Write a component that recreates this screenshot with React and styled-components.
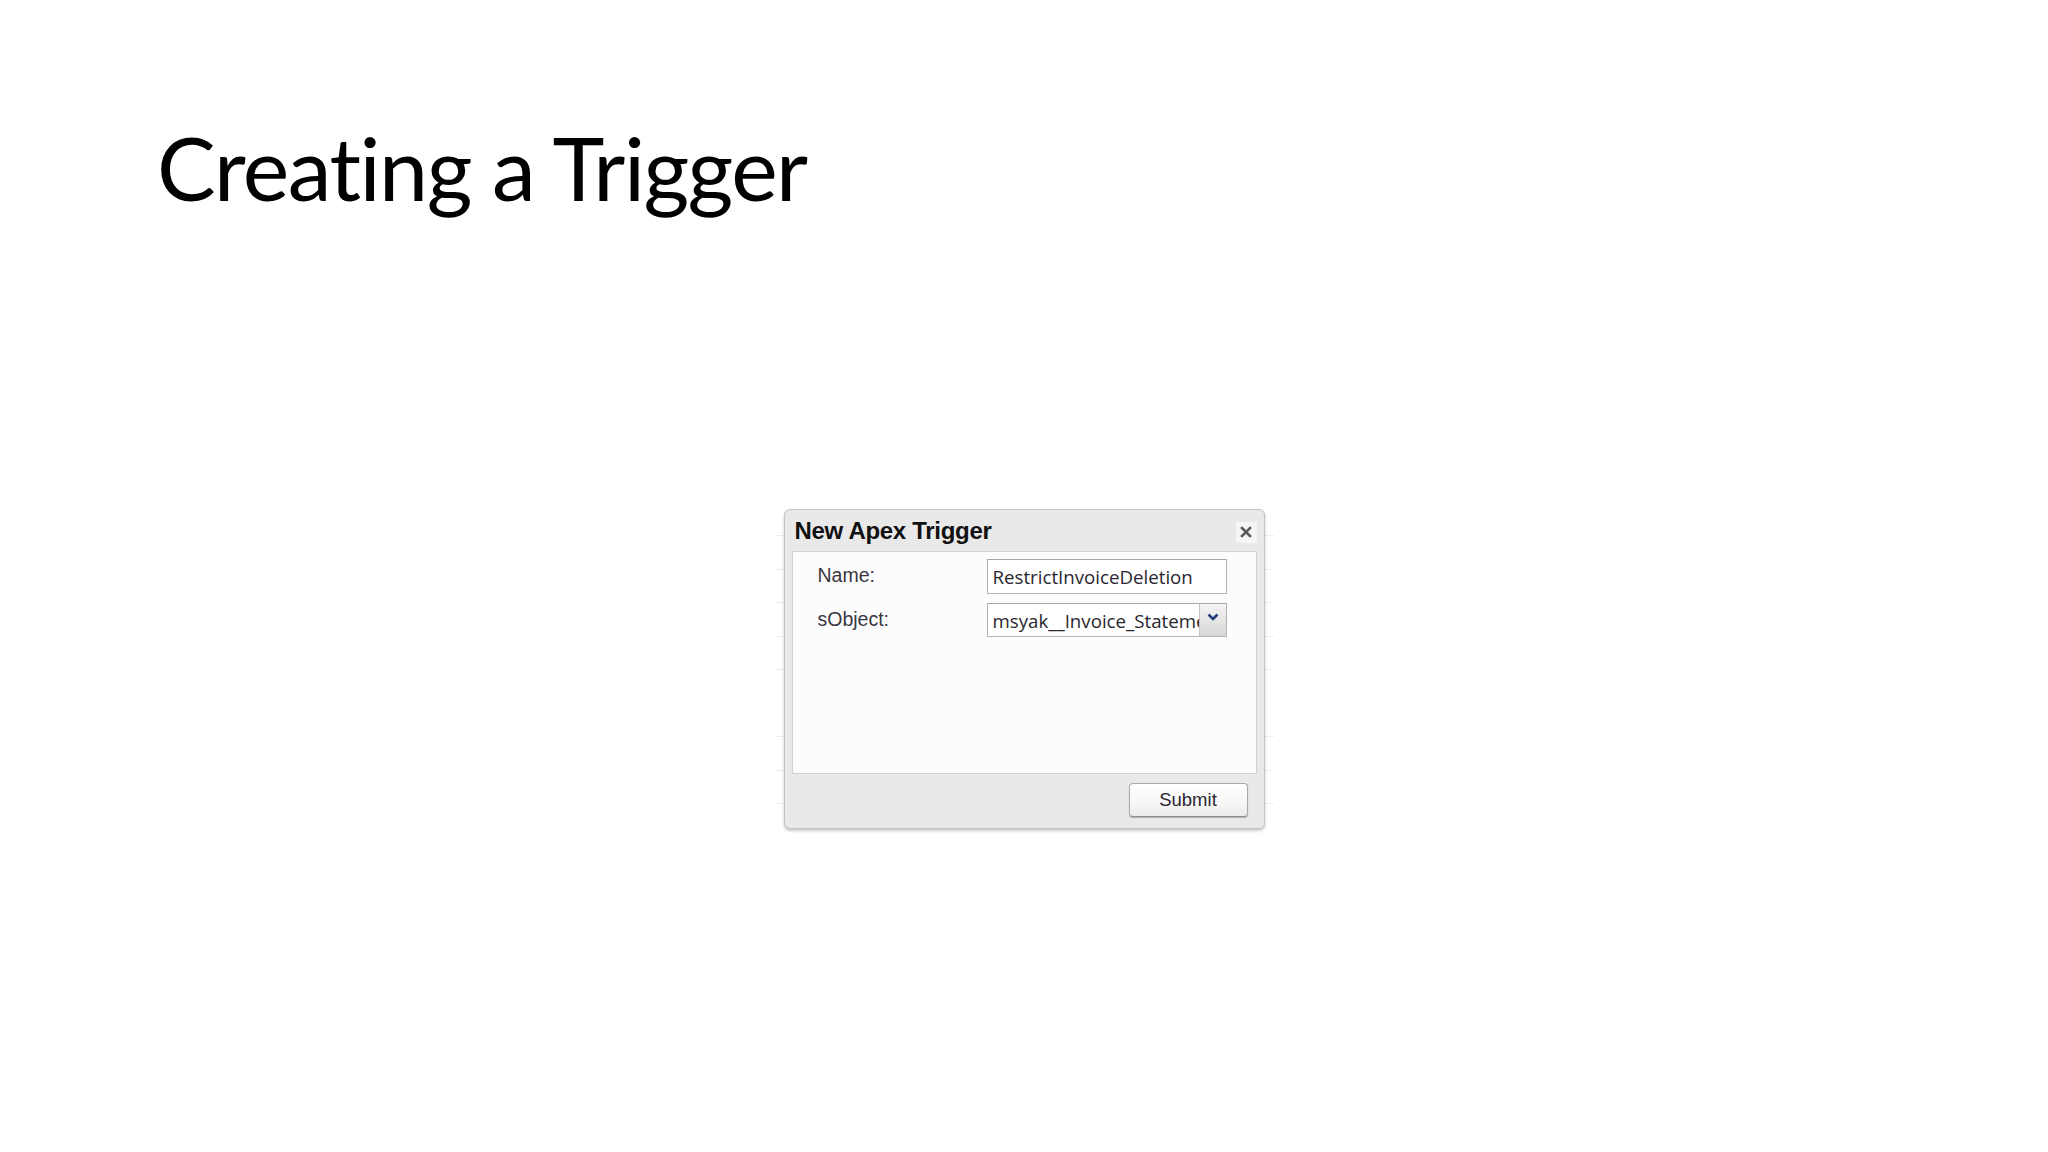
import React from 'react';
import styled, { createGlobalStyle } from 'styled-components';

const GlobalStyle = createGlobalStyle`
  html, body {
    margin: 0;
    padding: 0;
    background: #ffffff;
  }
  * {
    box-sizing: border-box;
  }
`;

const Slide = styled.div`
  width: 2048px;
  height: 1152px;
  background: #ffffff;
  display: flex;
  flex-direction: column;
  overflow: hidden;
`;

const Title = styled.h1`
  margin: 0;
  padding: 112px 0 0 157px;
  font-family: Lato, 'Open Sans', sans-serif;
  font-weight: 400;
  font-size: 88px;
  line-height: 110px;
  color: #000;
  letter-spacing: -1.5px;
`;

const Stage = styled.div`
  display: flex;
  justify-content: center;
  padding-top: 287px;
`;

// faint table rows of the page behind the modal
const Backdrop = styled.div`
  padding: 0 9px;
  background: repeating-linear-gradient(
    to bottom,
    transparent 0px,
    transparent 26px,
    #eeeeee 26px,
    #eeeeee 27px,
    transparent 27px,
    transparent 33.5px
  );
`;

const Dialog = styled.div`
  width: 481px;
  height: 320px;
  background: #e9e9e9;
  border: 1px solid #c3c3c3;
  border-radius: 6px;
  box-shadow: 0 2px 3px rgba(0, 0, 0, 0.22);
  display: flex;
  flex-direction: column;
`;

const Header = styled.div`
  height: 41px;
  display: flex;
  align-items: center;
  justify-content: space-between;
  padding: 0 7px 0 10px;
`;

const DialogTitle = styled.div`
  font-family: 'Liberation Sans', Arial, sans-serif;
  font-weight: 700;
  font-size: 24px;
  color: #111;
  letter-spacing: -0.3px;
  padding-top: 1px;
`;

const CloseBox = styled.div`
  width: 21px;
  height: 21px;
  background: #f5f5f5;
  display: flex;
  align-items: center;
  justify-content: center;
  margin-top: 3px;
`;

const Body = styled.div`
  margin: 0 7px;
  height: 223px;
  background: #fcfcfc;
  border: 1px solid #d2d2d2;
  padding: 7px 29px 0 25px;
  display: flex;
  flex-direction: column;
  gap: 9px;
`;

const Row = styled.div`
  display: flex;
  align-items: center;
  justify-content: space-between;
`;

const Label = styled.div`
  font-family: 'Liberation Sans', Tahoma, sans-serif;
  font-size: 19.5px;
  color: #3a3640;
  margin-top: ${p => p.shift || 0}px;
`;

const Field = styled.div`
  width: 240px;
  height: ${p => p.h}px;
  border: 1px solid #b4b4b4;
  border-top-color: #a8a8a8;
  background: #ffffff;
  display: flex;
  align-items: stretch;
  overflow: hidden;
`;

const FieldText = styled.div`
  flex: 1;
  font-family: 'Open Sans', 'Noto Sans', sans-serif;
  font-size: 18.7px;
  color: #2a2630;
  padding: 0 0 0 5px;
  display: flex;
  align-items: center;
  white-space: nowrap;
  overflow: hidden;
`;

const DropButton = styled.div`
  width: 27px;
  flex: none;
  border-left: 1px solid #c4c4c4;
  background: linear-gradient(to bottom, #f3f3f3 0%, #e4e4e4 55%, #d6d6d6 100%);
  display: flex;
  justify-content: center;
  padding-top: 9px;
`;

const Footer = styled.div`
  flex: 1;
  display: flex;
  justify-content: flex-end;
  align-items: flex-start;
  padding: 9px 16px 0 0;
`;

const SubmitButton = styled.button`
  width: 119px;
  height: 34px;
  border: 1px solid #a9a9a9;
  border-bottom-color: #8e8e8e;
  border-radius: 4px;
  background: linear-gradient(to bottom, #ffffff 0%, #f6f6f6 60%, #ebebeb 100%);
  box-shadow: 0 1px 1px rgba(0, 0, 0, 0.25);
  font-family: 'Liberation Sans', Tahoma, sans-serif;
  font-size: 18.5px;
  color: #2a2630;
  padding: 0;
  cursor: pointer;
`;

const CloseIcon = () => (
  <svg width="12" height="12" viewBox="0 0 12 12">
    <path d="M2 2 L10 10 M10 2 L2 10" stroke="#5a5a5a" strokeWidth="2.6" strokeLinecap="square" />
  </svg>
);

const Chevron = () => (
  <svg width="12" height="8" viewBox="0 0 12 8">
    <path d="M1.5 1.5 L6 6 L10.5 1.5" fill="none" stroke="#243f7a" strokeWidth="2.6" />
  </svg>
);

export default function App() {
  return (
    <Slide>
      <GlobalStyle />
      <Title>Creating a Trigger</Title>
      <Stage>
        <Backdrop>
          <Dialog>
            <Header>
              <DialogTitle>New Apex Trigger</DialogTitle>
              <CloseBox>
                <CloseIcon />
              </CloseBox>
            </Header>
            <Body>
              <Row>
                <Label shift={-3}>Name:</Label>
                <Field h={35}>
                  <FieldText>RestrictInvoiceDeletion</FieldText>
                </Field>
              </Row>
              <Row>
                <Label shift={-2}>sObject:</Label>
                <Field h={34}>
                  <FieldText>msyak__Invoice_Statement__c</FieldText>
                  <DropButton>
                    <Chevron />
                  </DropButton>
                </Field>
              </Row>
            </Body>
            <Footer>
              <SubmitButton>Submit</SubmitButton>
            </Footer>
          </Dialog>
        </Backdrop>
      </Stage>
    </Slide>
  );
}
